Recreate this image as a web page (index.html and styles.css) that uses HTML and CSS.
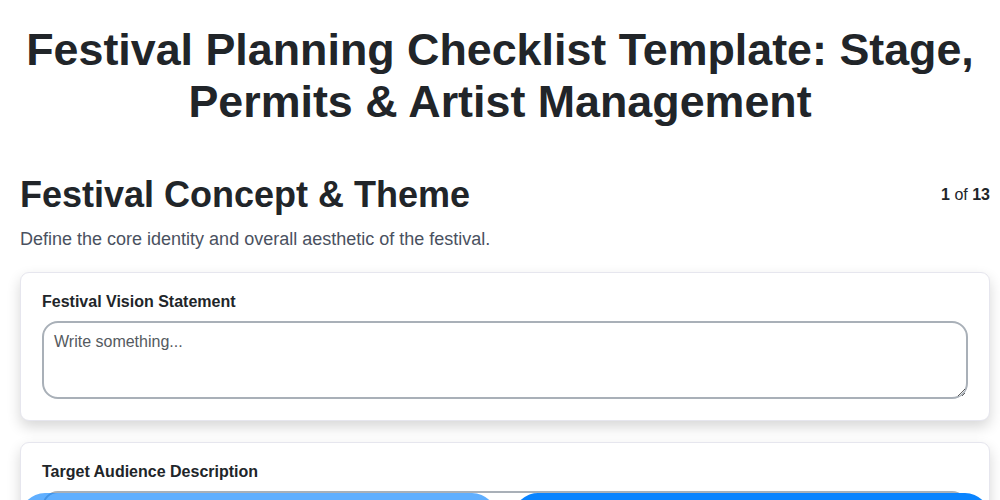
FILE: index.html
```html
<!DOCTYPE html>
<html lang="en">
<head>
<meta charset="utf-8">
<title>Festival Planning Checklist Template</title>
<link rel="stylesheet" href="styles.css">
</head>
<body>
<h1 class="page-title">Festival Planning Checklist Template: Stage, Permits &amp; Artist Management</h1>
<main class="container">
  <div class="step-head">
    <h2 class="step-title">Festival Concept &amp; Theme</h2>
    <div class="counter"><b>1</b> of <b>13</b></div>
  </div>
  <p class="step-desc">Define the core identity and overall aesthetic of the festival.</p>

  <section class="card">
    <label class="field-label" for="f1">Festival Vision Statement</label>
    <textarea id="f1" class="field-input" placeholder="Write something..."></textarea>
  </section>

  <section class="card">
    <label class="field-label" for="f2">Target Audience Description</label>
    <textarea id="f2" class="field-input" placeholder="Write something..."></textarea>
  </section>

  <section class="card">
    <label class="field-label" for="f3">Festival Theme &amp; Aesthetic</label>
    <textarea id="f3" class="field-input" placeholder="Write something..."></textarea>
  </section>
</main>
<nav class="nav-bar">
  <button class="nav-btn prev" disabled>Previous</button>
  <button class="nav-btn next">Next</button>
</nav>
</body>
</html>
```
FILE: styles.css
```css
* { box-sizing: border-box; }
html, body { margin: 0; padding: 0; background: #ffffff; }
body {
  font-family: "Liberation Sans", Arial, sans-serif;
  color: #212529;
}
.page-title {
  margin: 24px 0 0;
  font-size: 44.8px;
  font-weight: 700;
  line-height: 51.5px;
  text-align: center;
  color: #212529;
}
.container {
  padding: 47px 10px 120px 20px;
}
.step-head {
  display: flex;
  justify-content: space-between;
  align-items: center;
}
.step-title {
  margin: 0;
  font-size: 36px;
  line-height: 42px;
  font-weight: 700;
}
.counter {
  font-size: 16px;
  color: #212529;
}
.step-desc {
  margin: 13px 0 23px;
  font-size: 18px;
  line-height: 20px;
  color: #4a5160;
}
.card {
  background: #fff;
  border: 1px solid #e6e6ee;
  border-radius: 9px;
  padding: 20px 21px 21px 21px;
  margin-bottom: 21px;
  box-shadow: 0 6px 14px rgba(0, 0, 0, 0.16);
}
.field-label {
  display: block;
  font-size: 16px;
  line-height: 18px;
  font-weight: 700;
  margin-bottom: 10px;
  color: #212529;
}
.field-input {
  display: block;
  width: 100%;
  height: 78px;
  padding: 10px 10px 8px;
  border: 2px solid #a9b0b8;
  border-radius: 16px;
  font-family: "Liberation Sans", Arial, sans-serif;
  font-size: 16px;
  color: #212529;
  background: #fff;
  resize: vertical;
}
.field-input::placeholder { color: #555a60; }
.nav-bar {
  position: fixed;
  left: 20px;
  right: 10px;
  top: 493px;
  display: flex;
  gap: 16px;
}
.nav-btn {
  flex: 1;
  height: 50px;
  border: none;
  border-radius: 25px;
  background: #0a84ff;
  color: #fff;
  font-family: "Liberation Sans", Arial, sans-serif;
  font-size: 17px;
  font-weight: 700;
}
.nav-btn.prev { opacity: 0.65; }
```
